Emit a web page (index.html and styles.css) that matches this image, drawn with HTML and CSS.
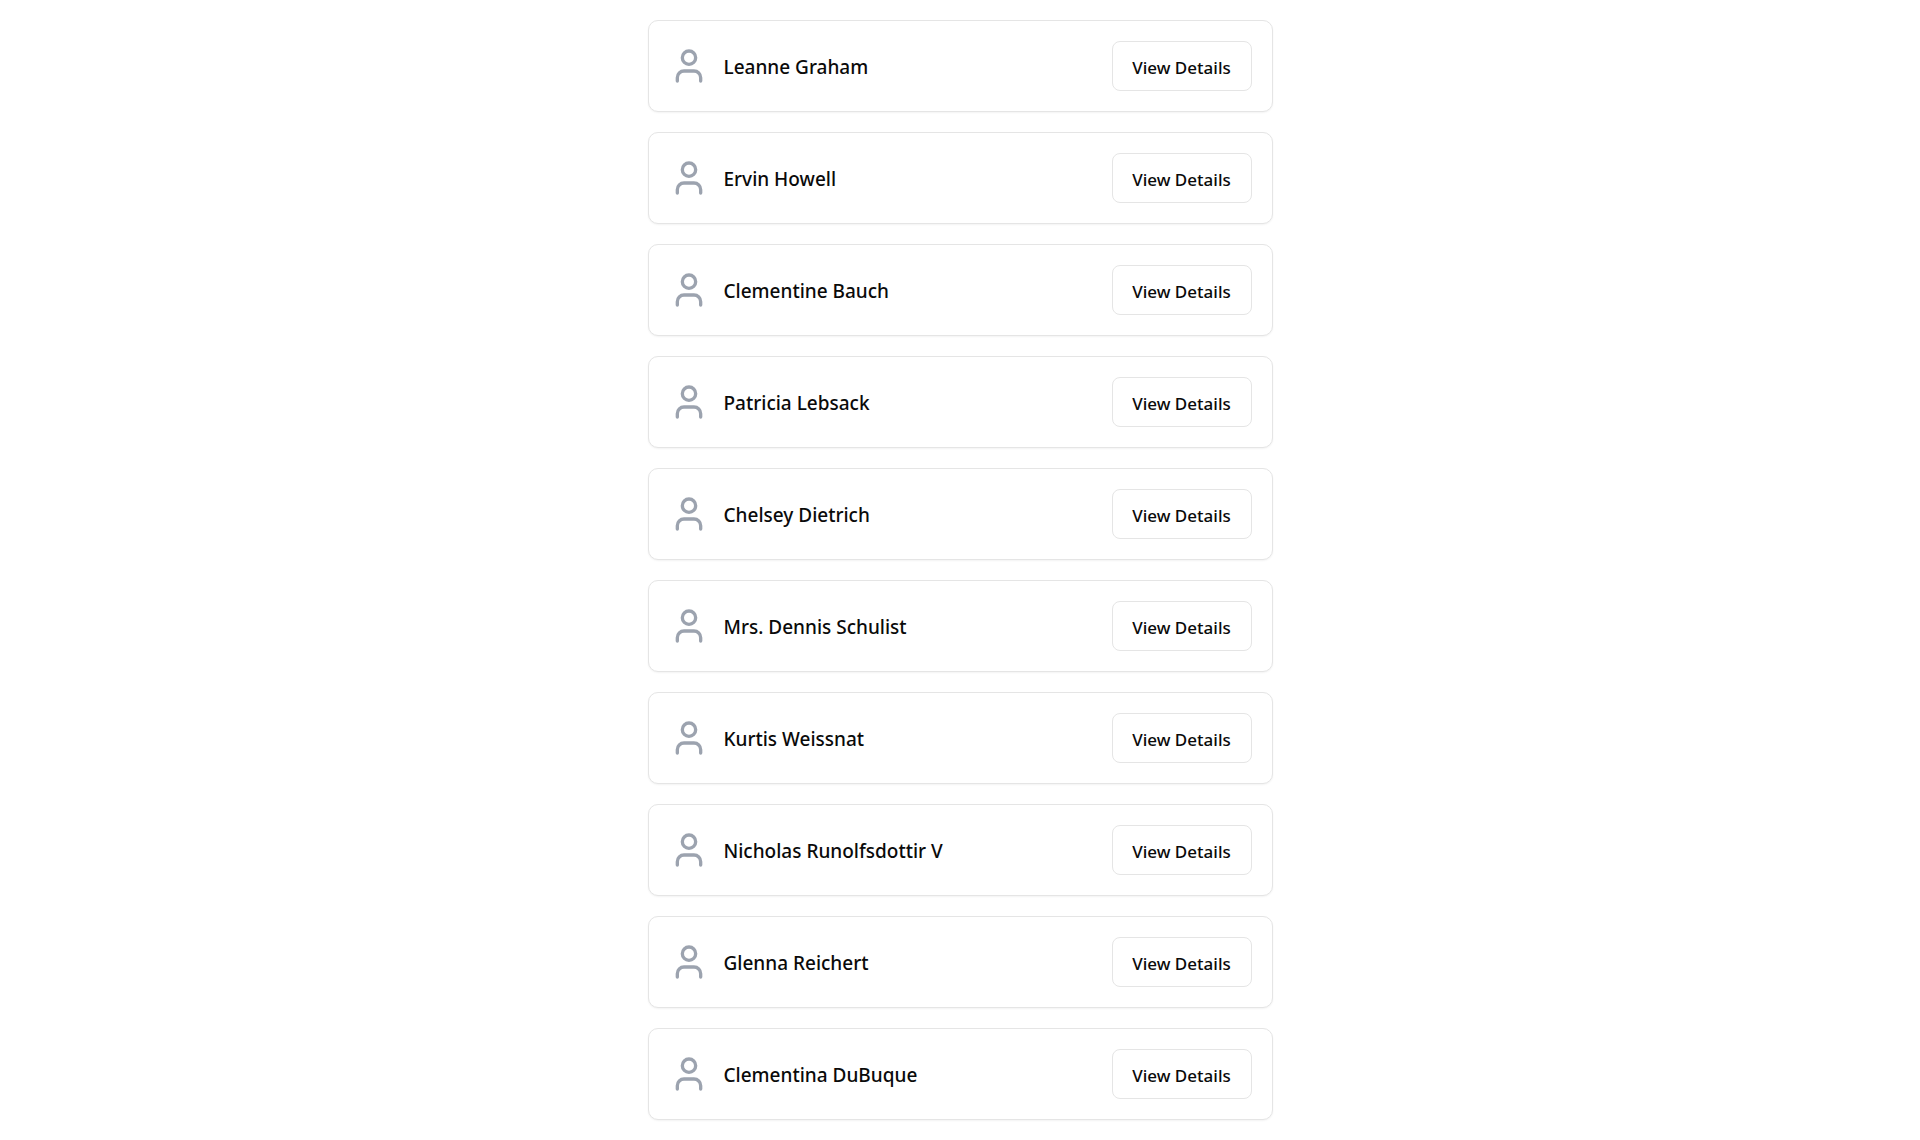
FILE: index.html
```html
<!DOCTYPE html>
<html lang="en">
<head>
<meta charset="utf-8">
<meta name="viewport" content="width=device-width, initial-scale=1">
<title>Users</title>
<link rel="stylesheet" href="styles.css">
</head>
<body>
<svg class="sprite" aria-hidden="true">
  <symbol id="user" viewBox="0 0 24 24">
    <path d="M19 21v-2a4 4 0 0 0-4-4H9a4 4 0 0 0-4 4v2"/>
    <circle cx="12" cy="7" r="4"/>
  </symbol>
</svg>
<main>
  <ul class="user-list">
    <li class="card"><svg class="icon" aria-hidden="true"><use href="#user"/></svg><h2 class="name">Leanne Graham</h2><button class="button" type="button">View Details</button></li>
    <li class="card"><svg class="icon" aria-hidden="true"><use href="#user"/></svg><h2 class="name">Ervin Howell</h2><button class="button" type="button">View Details</button></li>
    <li class="card"><svg class="icon" aria-hidden="true"><use href="#user"/></svg><h2 class="name">Clementine Bauch</h2><button class="button" type="button">View Details</button></li>
    <li class="card"><svg class="icon" aria-hidden="true"><use href="#user"/></svg><h2 class="name">Patricia Lebsack</h2><button class="button" type="button">View Details</button></li>
    <li class="card"><svg class="icon" aria-hidden="true"><use href="#user"/></svg><h2 class="name">Chelsey Dietrich</h2><button class="button" type="button">View Details</button></li>
    <li class="card"><svg class="icon" aria-hidden="true"><use href="#user"/></svg><h2 class="name">Mrs. Dennis Schulist</h2><button class="button" type="button">View Details</button></li>
    <li class="card"><svg class="icon" aria-hidden="true"><use href="#user"/></svg><h2 class="name">Kurtis Weissnat</h2><button class="button" type="button">View Details</button></li>
    <li class="card"><svg class="icon" aria-hidden="true"><use href="#user"/></svg><h2 class="name">Nicholas Runolfsdottir V</h2><button class="button" type="button">View Details</button></li>
    <li class="card"><svg class="icon" aria-hidden="true"><use href="#user"/></svg><h2 class="name">Glenna Reichert</h2><button class="button" type="button">View Details</button></li>
    <li class="card"><svg class="icon" aria-hidden="true"><use href="#user"/></svg><h2 class="name">Clementina DuBuque</h2><button class="button" type="button">View Details</button></li>
  </ul>
</main>
</body>
</html>
```
FILE: styles.css
```css
* {
  box-sizing: border-box;
}

body {
  margin: 0;
  background: #fff;
  color: #0a0a0a;
  font-family: "Segoe UI", "Noto Sans", "Open Sans", sans-serif;
}

.sprite {
  display: none;
}

.user-list {
  display: grid;
  gap: 20px;
  max-width: 665px;
  margin: 0 auto;
  padding: 20px;
  list-style: none;
}

.card {
  display: flex;
  align-items: center;
  gap: 15px;
  padding: 20px;
  border: 1px solid #e5e5e5;
  border-radius: 10px;
  background: #fff;
  box-shadow: 0 1px 2px rgb(0 0 0 / 5%);
}

.icon {
  flex: none;
  width: 40px;
  height: 40px;
  fill: none;
  stroke: #9ca3af;
  stroke-width: 2;
  stroke-linecap: round;
  stroke-linejoin: round;
}

.name {
  flex: 1;
  margin: 0;
  padding-top: 2px;
  font-size: 19px;
  font-weight: 500;
  line-height: 28px;
}

.button {
  height: 50px;
  min-width: 140px;
  padding: 2px 16px 0;
  border: 1px solid #e5e5e5;
  border-radius: 8px;
  background: #fff;
  color: inherit;
  font-family: inherit;
  font-size: 17px;
  font-weight: 500;
  line-height: 25px;
  white-space: nowrap;
  cursor: pointer;
}

.button:hover {
  background: #f5f5f5;
}
```
